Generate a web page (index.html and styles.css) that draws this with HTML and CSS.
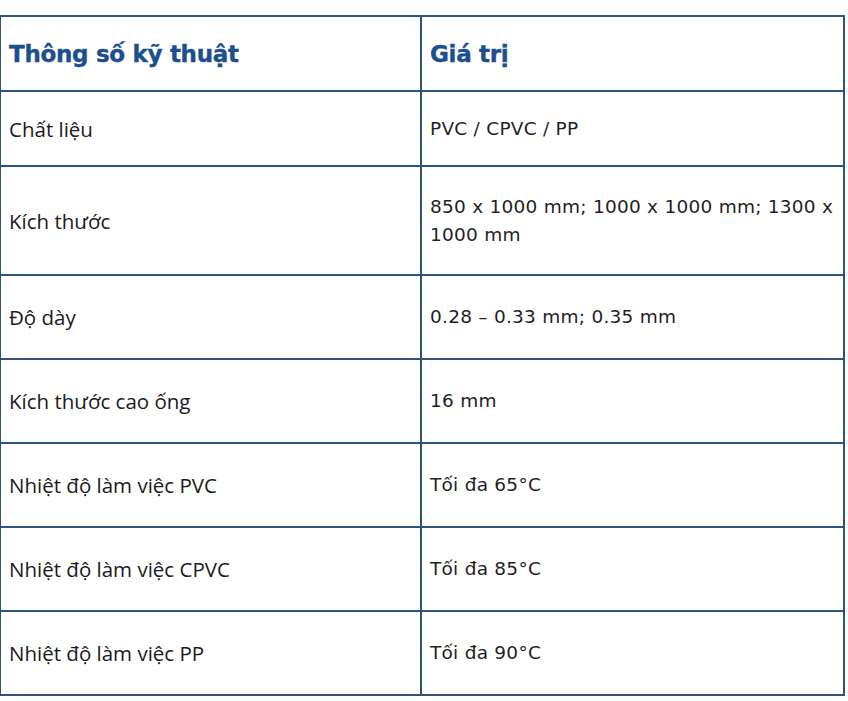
FILE: index.html
```html
<!DOCTYPE html>
<html lang="vi">
<head>
<meta charset="utf-8">
<title>Thông số kỹ thuật</title>
<link rel="stylesheet" href="styles.css">
</head>
<body>
<table class="spec">
  <colgroup>
    <col class="col-name">
    <col class="col-value">
  </colgroup>
  <thead>
    <tr class="row-head">
      <th>Thông số kỹ thuật</th>
      <th>Giá trị</th>
    </tr>
  </thead>
  <tbody>
    <tr class="row-short">
      <td class="name">Chất liệu</td>
      <td class="value">PVC / CPVC / PP</td>
    </tr>
    <tr class="row-tall">
      <td class="name">Kích thước</td>
      <td class="value">850 x 1000 mm; 1000 x 1000 mm; 1300 x 1000 mm</td>
    </tr>
    <tr class="row">
      <td class="name">Độ dày</td>
      <td class="value">0.28 – 0.33 mm; 0.35 mm</td>
    </tr>
    <tr class="row">
      <td class="name">Kích thước cao ống</td>
      <td class="value">16 mm</td>
    </tr>
    <tr class="row">
      <td class="name">Nhiệt độ làm việc PVC</td>
      <td class="value">Tối đa 65°C</td>
    </tr>
    <tr class="row">
      <td class="name">Nhiệt độ làm việc CPVC</td>
      <td class="value">Tối đa 85°C</td>
    </tr>
    <tr class="row">
      <td class="name">Nhiệt độ làm việc PP</td>
      <td class="value">Tối đa 90°C</td>
    </tr>
  </tbody>
</table>
</body>
</html>
```

FILE: styles.css
```css
html, body {
  margin: 0;
  padding: 0;
  background: #ffffff;
}

body {
  padding-top: 15px;
}

.spec {
  border-collapse: collapse;
  table-layout: fixed;
  width: 844px;
  margin-left: -1px;
}

.col-name { width: 421px; }
.col-value { width: 423px; }

.spec th,
.spec td {
  border: 2px solid #30537a;
  vertical-align: middle;
  text-align: left;
  padding: 0 4px 0 8px;
}

.spec th {
  font-family: "DejaVu Sans", sans-serif;
  font-weight: bold;
  font-size: 23px;
  color: #1c4f8f;
  letter-spacing: -0.3px;
  -webkit-text-stroke: 0.4px #1c4f8f;
}

.spec th + th,
.spec td.value {
  padding-left: 8px;
}

.name {
  font-family: "Open Sans", sans-serif;
  font-size: 20.5px;
  color: #1a1a1a;
}

.value {
  font-family: "DejaVu Sans", sans-serif;
  font-size: 18.5px;
  letter-spacing: 0.25px;
  line-height: 28px;
  color: #1f1f1f;
}

.row-head { height: 75px; }
.row-short { height: 75px; }
.row-tall { height: 109px; }
.row { height: 84px; }
```
